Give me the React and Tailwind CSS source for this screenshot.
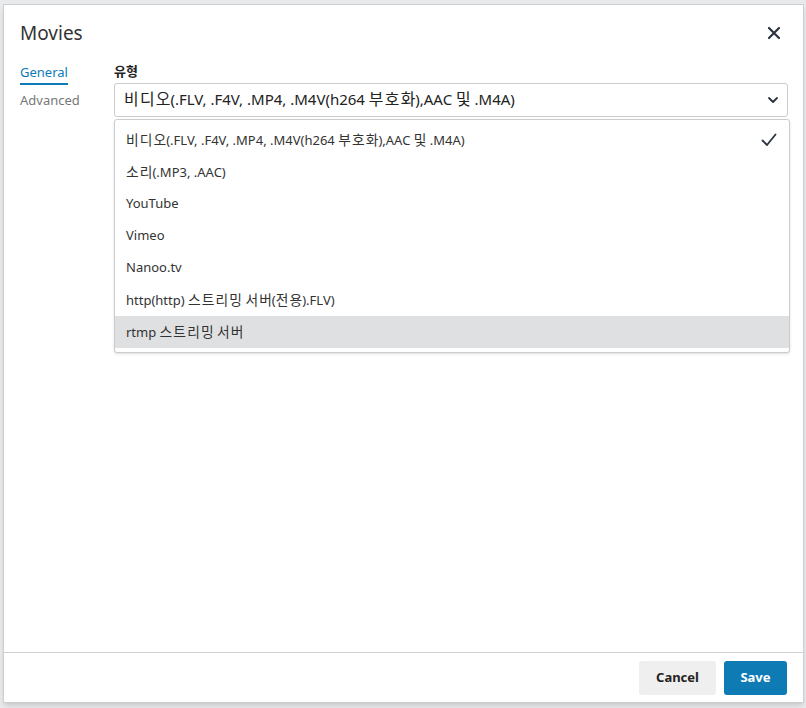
import React, { useState } from 'react';

const options = [
  '비디오(.FLV, .F4V, .MP4, .M4V(h264 부호화),AAC 및 .M4A)',
  '소리(.MP3, .AAC)',
  'YouTube',
  'Vimeo',
  'Nanoo.tv',
  'http(http) 스트리밍 서버(전용).FLV)',
  'rtmp 스트리밍 서버',
];

const font = { fontFamily: '"Noto Sans", "Noto Sans CJK KR", sans-serif' };

// Hangul runs get a little extra size/tracking so widths line up with the original
function Label({ text }) {
  const parts = text.split(/([\uAC00-\uD7A3]+)/);
  return (
    <span>
      {parts.map((p, i) => {
        if (!/[\uAC00-\uD7A3]/.test(p)) return <span key={i}>{p}</span>;
        return (
          <span key={i} className="text-[1.06em]">
            <span className="tracking-[0.08em]">{p.slice(0, -1)}</span>
            {p.slice(-1)}
          </span>
        );
      })}
    </span>
  );
}

export default function App() {
  const [selected] = useState(0);
  const [hover] = useState(6);

  return (
    <div className="h-[708px] w-[806px] bg-[#e9eaec] pt-[4px] pl-[3px]" style={font}>
      <div className="flex h-[699px] w-[801px] flex-col border border-[#cfcfcf] bg-white shadow-md">
        {/* Header */}
        <div className="flex h-[56px] items-center justify-between pl-[16px] pr-[22px]">
          <h1 className="text-[19px] text-[#333]">Movies</h1>
          <button className="text-[#2b3440]">
            <svg width="14" height="14" viewBox="0 0 14 14" fill="none" stroke="currentColor" strokeWidth="2.2" strokeLinecap="round">
              <path d="M2 2l10 10M12 2L2 12" />
            </svg>
          </button>
        </div>

        {/* Body */}
        <div className="flex flex-1 pl-[16px] pr-[15px]">
          <nav className="flex w-[94px] flex-col text-[13px]">
            <span className="mt-[2px] w-fit border-b-2 border-[#0e7bb8] text-[#0e7bb8]">General</span>
            <span className="mt-[6px] text-[#777]">Advanced</span>
          </nav>
          <div className="relative flex-1">
            <div className="h-[19px] pt-px text-[13px] font-bold text-[#222]">유형</div>
            <div className="mt-[3px] flex h-[34px] items-center justify-between rounded-[3px] border border-[#ccc] pl-[9px] pr-[8px] text-[15px] text-[#222]">
              <Label text={options[selected]} />
              <svg width="12" height="8" viewBox="0 0 12 8" fill="none" stroke="#2b3440" strokeWidth="1.8" strokeLinecap="round" strokeLinejoin="round">
                <path d="M2 2l4 4 4-4" />
              </svg>
            </div>
            <ul className="absolute left-0 right-[-2px] top-[58px] rounded-[3px] border border-[#ccc] bg-white py-[4px] shadow-sm">
              {options.map((o, i) => (
                <li
                  key={o}
                  className={`flex h-[32px] items-center justify-between pl-[11px] pr-[12px] text-[13px] text-[#333] ${i === hover ? 'bg-[#dfe0e2]' : ''}`}
                >
                  <Label text={o} />
                  {i === selected && (
                    <svg width="16" height="14" viewBox="0 0 16 14" fill="none" stroke="#2b3440" strokeWidth="1.8" strokeLinecap="round" strokeLinejoin="round">
                      <path d="M1.5 7.5l4.5 4.5L14.5 1.5" />
                    </svg>
                  )}
                </li>
              ))}
            </ul>
          </div>
        </div>

        {/* Footer */}
        <div className="flex h-[50px] items-center justify-end gap-[8px] border-t border-[#cfcfcf] pr-[16px] pt-[1px] text-[13px] font-bold">
          <button className="h-[34px] w-[77px] rounded-[3px] bg-[#efefef] text-[#222]">Cancel</button>
          <button className="h-[34px] w-[63px] rounded-[3px] bg-[#0f7bb5] text-white">Save</button>
        </div>
      </div>
    </div>
  );
}
